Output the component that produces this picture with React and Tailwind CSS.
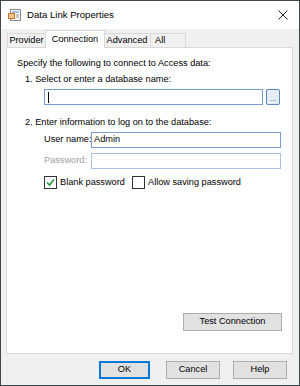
import React from "react";

function Checkbox({ checked }) {
  return (
    <span className="w-[13px] h-[13px] border border-[#333] bg-white flex items-center justify-center shrink-0">
      {checked && (
        <svg width="9" height="9" viewBox="0 0 9 9">
          <path d="M1 4.5 L3.5 7 L8 1.5" fill="none" stroke="#1e9b36" strokeWidth="1.6" />
        </svg>
      )}
    </span>
  );
}

export default function App() {
  return (
    <div className="w-[300px] h-[386px] bg-[#f0f0f0] border border-[#3c4a4a] flex flex-col text-[9.2px] text-black overflow-hidden" style={{ fontFamily: '"Liberation Sans", Arial, sans-serif' }}>
      {/* Title bar */}
      <div className="h-[28px] bg-white flex items-center shrink-0">
        <svg width="14" height="14" viewBox="0 0 14 14" className="ml-[7px]">
          <rect x="2.5" y="1.5" width="10" height="11" fill="#f4f4f4" stroke="#8a8a8a" />
          <rect x="0.5" y="5.5" width="6" height="5" fill="#f7c68c" stroke="#c8782c" />
          <line x1="4" y1="4" x2="11" y2="4" stroke="#5b8cc9" />
          <line x1="8" y1="7" x2="11" y2="7" stroke="#9a9a9a" />
          <line x1="8" y1="9" x2="11" y2="9" stroke="#9a9a9a" />
        </svg>
        <span className="ml-[5px] text-[9.6px] text-black">Data Link Properties</span>
        <span className="ml-auto mr-[11px] text-[#222]">
          <svg width="10" height="10" viewBox="0 0 10 10">
            <path d="M0.5 0.5 L9.5 9.5 M9.5 0.5 L0.5 9.5" stroke="#222" strokeWidth="1" />
          </svg>
        </span>
      </div>
      {/* Tabs */}
      <div className="flex items-end h-[18px] mt-[1px] pl-[6px] shrink-0 whitespace-nowrap">
        <div className="h-[15px] w-[39px] border border-b-0 border-[#d9d9d9] bg-[#f0f0f0] flex items-center justify-center">Provider</div>
        <div className="h-[18px] w-[60px] border border-b-0 border-[#d9d9d9] bg-white flex items-start justify-center pt-[2px] -mx-[1px] relative z-10">Connection</div>
        <div className="h-[15px] w-[47px] border border-b-0 border-l-0 border-[#d9d9d9] bg-[#f0f0f0] flex items-center justify-center">Advanced</div>
        <div className="h-[15px] w-[35px] pl-[4px] border border-b-0 border-l-0 border-[#d9d9d9] bg-[#f0f0f0] flex items-center">All</div>
      </div>
      {/* Panel */}
      <div className="mx-[5px] w-[287px] h-[307px] bg-white border border-[#d9d9d9] -mt-[1px] flex flex-col px-[10px] pt-[9px] shrink-0 whitespace-nowrap">
        <div className="leading-[13px]">Specify the following to connect to Access data:</div>
        <div className="leading-[13px] ml-[8px] mt-[3px]">1. Select or enter a database name:</div>
        <div className="flex items-center mt-[3px] ml-[27px]">
          <div className="w-[219px] h-[16px] border border-[#7a9cd3] flex items-center pl-[3px]">
            <span className="w-px h-[11px] bg-black"></span>
          </div>
          <div className="ml-[3px] w-[14px] h-[16px] border border-[#5e87b8] rounded-[2px] bg-[#e5eef8] text-[8px] text-[#444] flex items-end justify-center leading-[10px]">...</div>
        </div>
        <div className="leading-[13px] ml-[8px] mt-[11px]">2. Enter information to log on to the database:</div>
        <div className="flex items-center mt-[3px] ml-[27px]">
          <span className="w-[47px]">User name:</span>
          <div className="w-[190px] h-[16px] border border-[#7a9cd3] flex items-center pl-[2px]">Admin</div>
        </div>
        <div className="flex items-center mt-[5px] ml-[27px]">
          <span className="w-[47px] text-[#a0a0a0]">Password:</span>
          <div className="w-[190px] h-[16px] border border-[#a9c0e3]"></div>
        </div>
        <div className="flex items-center mt-[7px] ml-[27px]">
          <Checkbox checked />
          <span className="ml-[3px] w-[72px]">Blank password</span>
          <Checkbox />
          <span className="ml-[3px]">Allow saving password</span>
        </div>
        <div className="flex-1"></div>
        <div className="flex justify-end mb-[22px]">
          <div className="w-[99px] h-[18px] border border-[#adadad] bg-[#e1e1e1] flex items-center justify-center">Test Connection</div>
        </div>
      </div>
      {/* Bottom buttons */}
      <div className="flex items-center mt-[7px] pl-[98px]">
        <div className="w-[51px] h-[18px] border-2 border-[#0078d7] bg-[#e1e1e1] flex items-center justify-center">OK</div>
        <div className="ml-[16px] w-[54px] h-[18px] border border-[#adadad] bg-[#e1e1e1] flex items-center justify-center">Cancel</div>
        <div className="ml-[13px] w-[54px] h-[18px] border border-[#adadad] bg-[#e1e1e1] flex items-center justify-center">Help</div>
      </div>
    </div>
  );
}
